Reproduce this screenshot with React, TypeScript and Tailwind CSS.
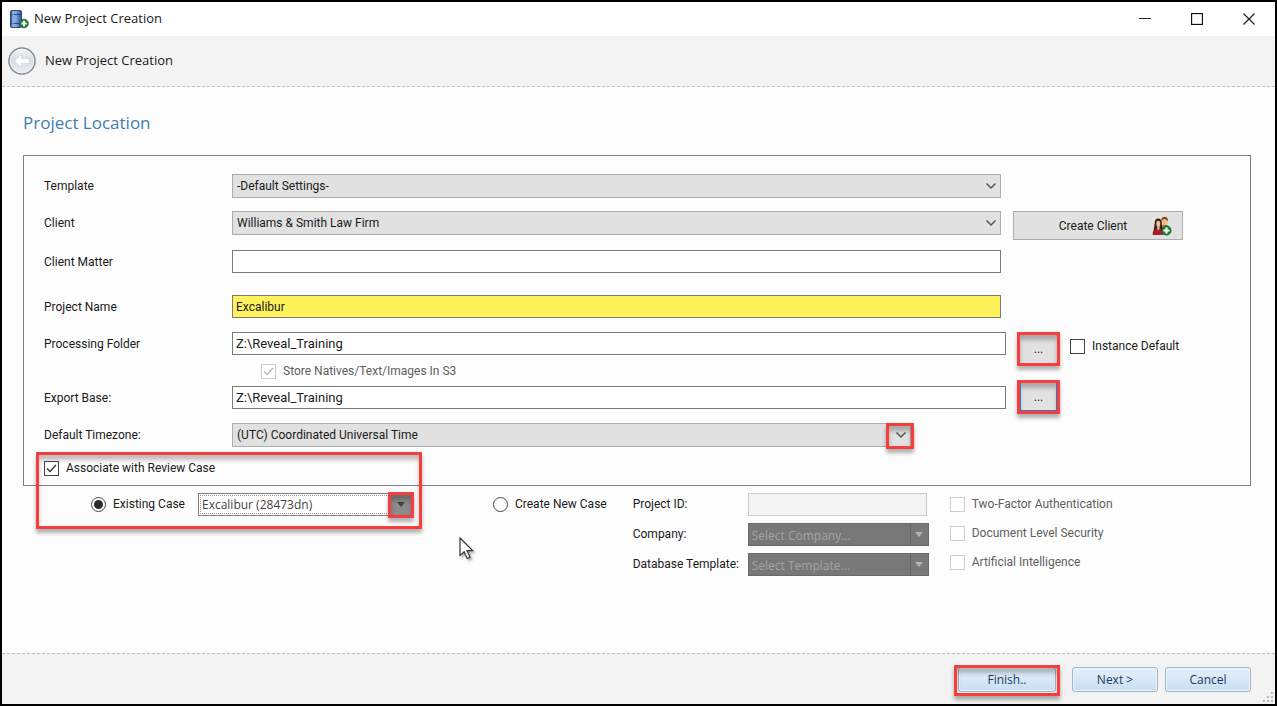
import { useState } from "react";
import type { ReactNode } from "react";
import clsx from "clsx";

const SHADOW =
  "shadow-[0_4px_4px_rgba(0,0,0,0.3),inset_0_5px_4px_rgba(0,0,0,0.25)]";

function Highlight({ className }: { className: string }) {
  return (
    <div
      className={clsx("pointer-events-none absolute border-3 border-[#f93d3d]", SHADOW, className)}
    />
  );
}

function PlusBadge({ x, y, r }: { x: number; y: number; r: number }) {
  return (
    <g>
      <circle cx={x} cy={y} r={r} fill="#1f8536" stroke="#0c5c20" strokeWidth="0.8" />
      <path
        d={`M${x - r + 1.6} ${y}H${x + r - 1.6}M${x} ${y - r + 1.6}V${y + r - 1.6}`}
        stroke="#fff"
        strokeWidth="2"
      />
    </g>
  );
}

function AppIcon() {
  return (
    <svg width="19" height="19" viewBox="0 0 19 19" aria-hidden="true">
      <defs>
        <linearGradient id="tower" x1="0" x2="1">
          <stop offset="0" stopColor="#274a92" />
          <stop offset="0.4" stopColor="#8fb2e4" />
          <stop offset="1" stopColor="#2a4f9a" />
        </linearGradient>
      </defs>
      <rect x="0.5" y="0.5" width="11" height="17" rx="1" fill="url(#tower)" stroke="#2b4a8c" />
      <path d="M1 4.5H11M1 13.5H11" stroke="#1c3468" strokeWidth="0.8" />
      <path d="M3 1V17" stroke="#b4cdf0" strokeWidth="1" />
      <PlusBadge x={14} y={13.5} r={4.3} />
    </svg>
  );
}

function PeopleIcon() {
  return (
    <svg width="20" height="20" viewBox="0 0 20 20" aria-hidden="true">
      <path d="M8.5 19V11q0-2.500 4-2.500t5 3V15z" fill="#c47a2c" />
      <ellipse cx="12.500" cy="4.800" rx="3" ry="3.700" fill="#efb98a" />
      <path d="M9.200 5Q8.800 1 12.500 0.700Q16.500 0.800 15.800 5.500Q15 3 12.500 3Q10.500 3 9.200 5z" fill="#8a4a18" />
      <path d="M1.500 15Q2.500 10 2.700 7Q3 2.600 6.300 2.600Q9.500 2.700 9.800 7Q10 11 11 15z" fill="#3e1c14" />
      <path d="M0.700 19Q0.300 13.500 4.500 12.700L6.300 14.500L8 12.700Q11.800 13.500 11.500 19z" fill="#a5202c" />
      <path d="M5 10H7.700V13L6.300 14.600L5 13z" fill="#e0a27a" />
      <ellipse cx="6.300" cy="7.800" rx="2" ry="3" fill="#f0bf98" />
      <PlusBadge x={14.500} y={14.500} r={4.600} />
    </svg>
  );
}

function BackIcon() {
  return (
    <svg width="28" height="28" viewBox="0 0 28 28" aria-hidden="true">
      <defs>
        <linearGradient id="orb" x1="0" y1="0" x2="0" y2="1">
          <stop offset="0" stopColor="#f2f4f6" />
          <stop offset="0.5" stopColor="#d5dce2" />
          <stop offset="1" stopColor="#e9f1f6" />
        </linearGradient>
      </defs>
      <circle cx="14" cy="14" r="13" fill="url(#orb)" stroke="#868d95" strokeWidth="1.600" />
      <circle cx="14" cy="14" r="11.800" fill="none" stroke="#f7f9fa" strokeWidth="0.800" />
      <path d="M6.500 14L13.500 7.500V11.700H21V16.300H13.500V20.500z" fill="#fff" stroke="#ccd4da" strokeWidth="0.600" />
    </svg>
  );
}

function Chevron() {
  return (
    <svg width="12" height="8" viewBox="0 0 12 8" className="pointer-events-none absolute right-1 top-2" aria-hidden="true">
      <path d="M1.500 1.500L6 6L10.500 1.500" fill="none" stroke="#555" strokeWidth="1.500" />
    </svg>
  );
}

function Combo({ id, value }: { id: string; value: string }) {
  return (
    <div className="relative flex-1">
      <select
        id={id}
        className="block h-6 w-full appearance-none border border-[#adadad] bg-[#e1e1e1] pl-1 pr-6 outline-none"
      >
        <option>{value}</option>
      </select>
      <Chevron />
    </div>
  );
}

function DarkCombo({ id, value }: { id: string; value: string }) {
  return (
    <div className="relative h-[23px]">
      <select
        id={id}
        disabled
        className="block h-[23px] w-full appearance-none border border-[#6a6a6a] bg-[#787878] pl-[3px] font-['Open_Sans',sans-serif] text-[#a3a3a3] opacity-100"
      >
        <option>{value}</option>
      </select>
      <div className="pointer-events-none absolute inset-y-px right-px flex w-[18px] items-center justify-center border-l border-[#656565]">
        <svg width="8" height="5" aria-hidden="true">
          <path d="M0 0H8L4 5z" fill="#b4b4b4" />
        </svg>
      </div>
    </div>
  );
}

interface CheckProps {
  label: string;
  defaultChecked?: boolean;
  disabled?: boolean;
  className?: string;
}

function Check({ label, defaultChecked, disabled, className }: CheckProps) {
  return (
    <label className={clsx("flex items-center gap-[7px]", disabled && "text-[#606060]", className)}>
      <span className="relative block size-[15px]">
        <input
          type="checkbox"
          defaultChecked={defaultChecked}
          disabled={disabled}
          className={clsx(
            "peer block size-[15px] appearance-none border bg-white",
            disabled ? "border-[#cccccc]" : "border-[#444]",
          )}
        />
        <svg
          viewBox="0 0 15 15"
          className="pointer-events-none absolute inset-0 hidden peer-checked:block"
          aria-hidden="true"
        >
          <path
            d="M3 7.500L6 10.500L12 4"
            fill="none"
            stroke={disabled ? "#b5b5b5" : "#333"}
            strokeWidth="1.300"
          />
        </svg>
      </span>
      {label}
    </label>
  );
}

interface RadioProps {
  label: string;
  checked: boolean;
  onChange: () => void;
}

function Radio({ label, checked, onChange }: RadioProps) {
  return (
    <label className="flex h-[22px] items-center gap-[7px]">
      <span className="relative block size-[15px]">
        <input
          type="radio"
          name="case"
          checked={checked}
          onChange={onChange}
          className="peer block size-[15px] appearance-none rounded-full border border-[#444] bg-white"
        />
        <span className="pointer-events-none absolute inset-[3px] hidden rounded-full bg-[#2b2b2b] peer-checked:block" />
      </span>
      {label}
    </label>
  );
}

function Row({ id, label, children, className }: { id: string; label: string; children: ReactNode; className?: string }) {
  return (
    <div className={clsx("flex h-6 items-start", className)}>
      <label htmlFor={id} className="w-[188px] leading-6">
        {label}
      </label>
      {children}
    </div>
  );
}

const FIELD = "h-[23px] min-w-0 flex-1 border border-[#7a7a7a] px-[3px] outline-none";
const BROWSE = "relative block h-[34px] w-[43px] bg-[#e1e1e1] leading-8";
const FOOTER_BTN =
  "h-[25px] rounded-[3px] border border-[#9db4cc] bg-linear-to-b from-[#e4f0fa] to-[#cadff2] text-[#1e395b] shadow-[inset_0_0_0_1px_#eef6fc]";

export default function App() {
  const [mode, setMode] = useState<"existing" | "new">("existing");

  return (
    <div className="flex min-h-screen flex-col border-2 border-black bg-[#fdfdfd] font-[Roboto,sans-serif] text-xs text-[#1a1a1a]">
      {/* Title bar */}
      <div className="flex h-[34px] items-center bg-white pl-2 font-['Open_Sans',sans-serif] text-[13px]">
        <AppIcon />
        <span className="ml-[5px] flex-1">New Project Creation</span>
        <div className="flex h-full">
          <button aria-label="Minimize" className="flex w-[52px] items-center justify-center">
            <svg width="12" height="12">
              <path d="M0 5.500H12" stroke="#222" />
            </svg>
          </button>
          <button aria-label="Maximize" className="flex w-[52px] items-center justify-center">
            <svg width="12" height="12">
              <rect x="0.500" y="0.500" width="11" height="11" fill="none" stroke="#111" strokeWidth="1.300" />
            </svg>
          </button>
          <button aria-label="Close" className="flex w-[52px] items-center justify-center">
            <svg width="12" height="12">
              <path d="M0.500 0.500L11.500 11.500M11.500 0.500L0.500 11.500" stroke="#222" strokeWidth="1.200" />
            </svg>
          </button>
        </div>
      </div>

      {/* Wizard header */}
      <header className="flex h-[51px] items-center border-b border-dashed border-[#b9c3d3] bg-[#f3f3f3] pl-1.5 font-['Open_Sans',sans-serif] text-[13px]">
        <button aria-label="Back">
          <BackIcon />
        </button>
        <span className="ml-[9px]">New Project Creation</span>
      </header>

      <main className="relative flex-1 pl-[21px] pr-6">
        <h1 className="pt-6 font-['Open_Sans',sans-serif] text-[17px] leading-6 text-[#3d7fb1]">
          Project Location
        </h1>

        <div className="relative mt-5">
          <section className="h-[331px] border border-[#7f7f7f] pl-5 pt-[18px]">
            <Row id="template" label="Template">
              <Combo id="template" value="-Default Settings-" />
              <div className="w-[249px]" />
            </Row>
            <Row id="client" label="Client" className="mt-[13px]">
              <Combo id="client" value="Williams & Smith Law Firm" />
              <div className="w-[249px] pl-3">
                <button className="flex h-[29px] w-[170px] items-center border border-[#adadad] bg-[#e1e1e1]">
                  <span className="flex-1 pl-5">Create Client</span>
                  <span className="pr-2.5">
                    <PeopleIcon />
                  </span>
                </button>
              </div>
            </Row>
            <Row id="matter" label="Client Matter" className="mt-[15px]">
              <input id="matter" className={clsx(FIELD, "bg-white")} />
              <div className="w-[249px]" />
            </Row>
            <Row id="name" label="Project Name" className="mt-[21px]">
              <input id="name" defaultValue="Excalibur" className={clsx(FIELD, "bg-[#fff25a]")} />
              <div className="w-[249px]" />
            </Row>

            <div className="mt-[13px] flex">
              <div className="flex-1">
                <Row id="folder" label="Processing Folder">
                  <input id="folder" defaultValue="Z:\Reveal_Training" className={clsx(FIELD, "bg-white text-[13px]")} />
                </Row>
                <Check
                  label="Store Natives/Text/Images In S3"
                  defaultChecked
                  disabled
                  className="ml-[217px] h-[30px]"
                />
                <Row id="export" label="Export Base:">
                  <input id="export" defaultValue="Z:\Reveal_Training" className={clsx(FIELD, "bg-white text-[13px]")} />
                </Row>
              </div>
              <div className="flex w-[244px] items-start gap-2.5 pl-[11px]">
                <div className="flex flex-col gap-3.5">
                  <button aria-label="Browse processing folder" className={BROWSE}>
                    ...
                    <Highlight className="inset-0" />
                  </button>
                  <button aria-label="Browse export base" className={BROWSE}>
                    ...
                    <Highlight className="inset-0" />
                    <span className="pointer-events-none absolute inset-[3px] border-x border-b border-[#2a7fc0]" />
                  </button>
                </div>
                <Check label="Instance Default" className="pt-1.5" />
              </div>
            </div>

            <Row id="timezone" label="Default Timezone:" className="mt-[9px]">
              <div className="relative flex flex-1">
                <Combo id="timezone" value="(UTC) Coordinated Universal Time" />
                <Highlight className="-right-[3px] top-0 h-[26px] w-7" />
              </div>
              <div className="w-[339px]" />
            </Row>

            <Check label="Associate with Review Case" defaultChecked className="mt-[13px]" />
          </section>

          <div className="flex items-start pl-[68px] pt-[7px]">
            <Radio label="Existing Case" checked={mode === "existing"} onChange={() => setMode("existing")} />
            <div className="relative ml-[13px] w-[215px]">
              <select
                aria-label="Existing case"
                className="block h-[23px] w-full appearance-none border border-[#7f7f7f] bg-white pl-[3px] font-['Open_Sans',sans-serif] text-[#444] outline-1 -outline-offset-3 outline-dotted outline-[#999]"
              >
                <option>Excalibur (28473dn)</option>
              </select>
              <div className="pointer-events-none absolute inset-y-0 right-0 flex w-6 items-center justify-center bg-[#8c8c8c]">
                <svg width="8" height="5" aria-hidden="true">
                  <path d="M0 0H8L4 5z" fill="#444" />
                </svg>
              </div>
              <Highlight className="-right-px -top-px h-[26px] w-[26px]" />
            </div>

            <div className="ml-20">
              <Radio label="Create New Case" checked={mode === "new"} onChange={() => setMode("new")} />
            </div>

            <div className="ml-[26px] grid grid-cols-[115px_181px] gap-y-[7px] whitespace-nowrap leading-[23px]">
              <label htmlFor="project-id">Project ID:</label>
              <input id="project-id" disabled className="h-[23px] w-[179px] border border-[#cccccc] bg-[#f3f3f3]" />
              <label htmlFor="company">Company:</label>
              <DarkCombo id="company" value="Select Company..." />
              <label htmlFor="db-template">Database Template:</label>
              <DarkCombo id="db-template" value="Select Template..." />
            </div>

            <div className="ml-[21px] flex flex-col gap-[13px] pt-[3px]">
              <Check label="Two-Factor Authentication" disabled />
              <Check label="Document Level Security" disabled />
              <Check label="Artificial Intelligence" disabled />
            </div>
          </div>

          <Highlight className="left-[13px] top-[297px] h-[77px] w-[386px]" />
        </div>

        {/* Mouse pointer */}
        <svg
          width="18"
          height="25"
          viewBox="0 0 18 25"
          className="pointer-events-none absolute left-[457px] top-[450px] drop-shadow-[2px_2px_1px_rgba(0,0,0,0.3)]"
          aria-hidden="true"
        >
          <path
            d="M1 1V18.500L5.200 14.800L8.200 21.500L11 20.300L8 13.700H13.500z"
            fill="#fff"
            stroke="#333"
            strokeWidth="1.200"
          />
        </svg>
      </main>

      <footer className="relative flex h-[51px] items-start justify-end border-t border-dashed border-[#b9bdd3] bg-[#f3f3f3] pr-6 pt-[13px] font-['Open_Sans',sans-serif]">
        <div className="relative mr-4">
          <button className={clsx(FOOTER_BTN, "w-[98px]")}>Finish..</button>
          <Highlight className="-inset-x-1 -bottom-1 -top-0.5" />
        </div>
        <button className={clsx(FOOTER_BTN, "mr-[7px] w-[86px]")}>Next &gt;</button>
        <button className={clsx(FOOTER_BTN, "w-[86px]")}>Cancel</button>
        <svg width="10" height="10" className="absolute bottom-0.5 right-0.5" aria-hidden="true">
          <path
            d="M8 0h2v2h-2zM4 4h2v2h-2zM8 4h2v2h-2zM0 8h2v2h-2zM4 8h2v2h-2zM8 8h2v2h-2z"
            fill="#b8b8b8"
          />
        </svg>
      </footer>
    </div>
  );
}
